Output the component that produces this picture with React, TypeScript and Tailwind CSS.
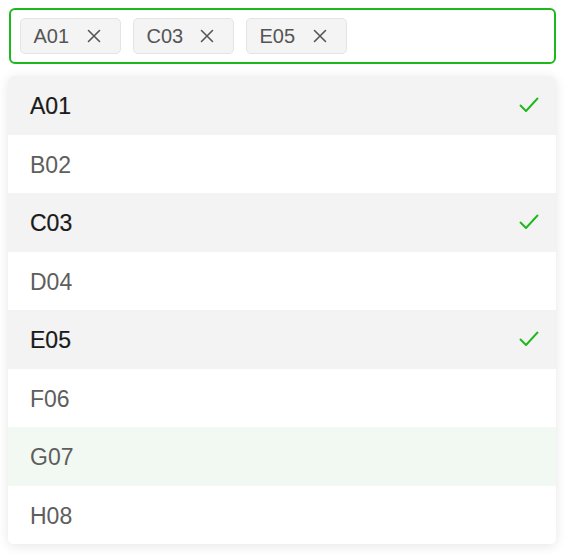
import { useState } from "react";

const options = ["A01", "B02", "C03", "D04", "E05", "F06", "G07", "H08"];

function CloseIcon() {
  return (
    <svg width="14" height="14" viewBox="0 0 14 14" fill="none">
      <path d="M1.5 1.5 L12.5 12.5 M12.5 1.5 L1.5 12.5" stroke="#555" strokeWidth="1.6" strokeLinecap="round" />
    </svg>
  );
}

function CheckIcon() {
  return (
    <svg width="20" height="16" viewBox="0 0 20 16" fill="none">
      <path d="M1.5 8.5 L7 14 L18.5 1.5" stroke="#1cb81c" strokeWidth="1.9" strokeLinecap="round" strokeLinejoin="round" />
    </svg>
  );
}

export default function App() {
  const [selected, setSelected] = useState<string[]>(["A01", "C03", "E05"]);
  const hovered = "G07";

  function toggle(v: string) {
    setSelected((s) => (s.includes(v) ? s.filter((x) => x !== v) : [...s, v]));
  }

  return (
    <div className="min-h-[558px] bg-white pt-2 pl-2 font-['Liberation_Sans',Arial,sans-serif]">
      {/* Input with tags */}
      <div className="ml-px flex h-14 w-[547px] items-center gap-3 rounded-md border-[2.5px] border-[#1cb81c] px-[8.5px]">
        {selected.map((v) => (
          <span
            key={v}
            className="flex h-9 w-[101px] items-center rounded-[5px] border border-[#e4e4e4] bg-[#f4f4f4] pl-[13px] text-[20px] text-[#555]"
          >
            <span className="w-[53px]">{v}</span>
            <button onClick={() => toggle(v)} className="flex items-center">
              <CloseIcon />
            </button>
          </span>
        ))}
      </div>

      {/* Dropdown */}
      <div className="mt-3 w-[548px] overflow-hidden rounded-md bg-white shadow-[0_2px_12px_rgba(0,0,0,0.1)]">
        {options.map((v) => {
          const isSel = selected.includes(v);
          const bg = isSel ? "bg-[#f3f3f3]" : v === hovered ? "bg-[#f2f9f2]" : "bg-white";
          return (
            <div
              key={v}
              onClick={() => toggle(v)}
              className={`flex h-[58.5px] cursor-pointer items-center justify-between pl-[22px] pr-[17px] text-[23px] ${bg} ${
                isSel ? "text-[#1a1a1a] [-webkit-text-stroke:0.2px_#1a1a1a]" : "text-[#5e5e5e]"
              }`}
            >
              <span className="pt-[2px]">{v}</span>
              {isSel && <CheckIcon />}
            </div>
          );
        })}
      </div>
    </div>
  );
}
